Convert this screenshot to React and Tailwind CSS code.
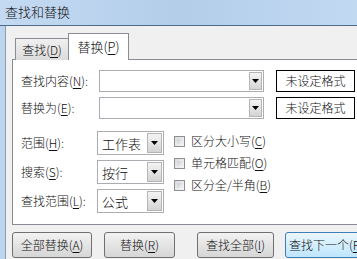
import React from "react";

function Arrow() {
  return (
    <svg width="7" height="4" viewBox="0 0 7 4">
      <path d="M0 0h7L3.5 4z" fill="#000" />
    </svg>
  );
}

function DropBtn({ className }) {
  return (
    <div
      className={
        "flex items-center justify-center border border-[#b5b5b5] bg-gradient-to-b from-[#f4f4f4] to-[#d4d4d4] " +
        className
      }
    >
      <Arrow />
    </div>
  );
}

function Mn({ children }) {
  return <u className="underline underline-offset-2">{children}</u>;
}

function ComboRow({ label, mn }) {
  return (
    <div className="flex items-center h-[22px]">
      <div className="w-[78px]">
        {label}(<Mn>{mn}</Mn>):
      </div>
      <div className="w-[165px] h-[22px] border border-[#abadb3] bg-white flex justify-end items-stretch p-[1px]">
        <DropBtn className="w-[13px]" />
      </div>
      <div className="ml-[12px] w-[79px] h-[22px] border border-black bg-white flex items-center justify-center">
        未设定格式
      </div>
    </div>
  );
}

function SelectRow({ label, mn, value }) {
  return (
    <div className="flex items-center h-[24px]">
      <div className="w-[76px]">
        {label}(<Mn>{mn}</Mn>):
      </div>
      <div className="w-[67px] h-[24px] border border-[#abadb3] bg-white flex items-center p-[1px]">
        <span className="flex-1 pl-[3px] text-[13px]">{value}</span>
        <DropBtn className="w-[15px] h-full" />
      </div>
    </div>
  );
}

function Check({ label, mn }) {
  return (
    <div className="flex items-center h-[22px]">
      <div className="w-[11px] h-[11px] border border-[#8e8f8f] bg-gradient-to-br from-[#dcdcdc] to-[#f6f6f6] p-[2px]">
        <div className="w-full h-full bg-gradient-to-br from-[#cbcfd5] to-[#f0f0f0]" />
      </div>
      <span className="ml-[6px]">
        {label}(<Mn>{mn}</Mn>)
      </span>
    </div>
  );
}

function Btn({ w, ml, focus, children }) {
  return (
    <div
      className={
        "h-[26px] rounded-[3px] border flex items-center justify-center shrink-0 " +
        w +
        " " +
        ml +
        (focus
          ? " border-[#3c7fb1] bg-gradient-to-b from-[#eaf6fd] to-[#bee6fd]"
          : " border-[#707070] bg-gradient-to-b from-[#f2f2f2] to-[#d6d6d6]")
      }
    >
      {children}
    </div>
  );
}

export default function App() {
  return (
    <div className="w-[357px] h-[259px] overflow-hidden flex flex-col bg-[#bcd4ee] text-[12px] leading-none font-light text-[#111] font-['Microsoft_YaHei','Noto_Sans_CJK_SC',sans-serif]">
      <div className="h-[26px] shrink-0 flex items-center pl-[5px] pb-[2px] bg-gradient-to-r from-[#c4daf2] via-[#b3cde9] to-[#c2d9f2] border-b border-[#4e6b8c] text-[13px]">
        查找和替换
      </div>
      <div className="flex-1 ml-[5px] w-[400px] border-l border-[#8a9bb0] bg-[#f0f0f0] flex flex-col">
        <div className="flex items-end h-[27px] mt-[7px] ml-[9px] -mb-px relative z-10">
          <div className="w-[54px] h-[22px] border border-b-0 border-[#898c95] bg-gradient-to-b from-[#f0f0f0] to-[#dcdcdc] flex items-center justify-center">
            查找(<Mn>D</Mn>)
          </div>
          <div className="w-[61px] h-[27px] -ml-px border border-b-0 border-[#898c95] bg-white flex items-center justify-center pb-[1px] text-[13px]">
            替换(<Mn>P</Mn>)
          </div>
        </div>
        <div className="ml-[6px] h-[166px] border border-[#898c95] bg-white pl-[8px] pt-[10px] flex flex-col">
          <div className="flex flex-col gap-[5px]">
            <ComboRow label="查找内容" mn="N" />
            <ComboRow label="替换为" mn="E" />
          </div>
          <div className="flex mt-[12px]">
            <div className="flex flex-col gap-[5px]">
              <SelectRow label="范围" mn="H" value="工作表" />
              <SelectRow label="搜索" mn="S" value="按行" />
              <SelectRow label="查找范围" mn="L" value="公式" />
            </div>
            <div className="flex flex-col ml-[10px] -mt-px">
              <Check label="区分大小写" mn="C" />
              <Check label="单元格匹配" mn="O" />
              <Check label="区分全/半角" mn="B" />
            </div>
          </div>
        </div>
        <div className="flex mt-[7px] ml-[6px]">
          <Btn w="w-[80px]" ml="">
            全部替换(<Mn>A</Mn>)
          </Btn>
          <Btn w="w-[71px]" ml="ml-[12px]">
            替换(<Mn>R</Mn>)
          </Btn>
          <Btn w="w-[77px]" ml="ml-[22px]">
            查找全部(<Mn>I</Mn>)
          </Btn>
          <Btn w="w-[82px]" ml="ml-[11px]" focus>
            查找下一个(<Mn>F</Mn>)
          </Btn>
        </div>
      </div>
    </div>
  );
}
